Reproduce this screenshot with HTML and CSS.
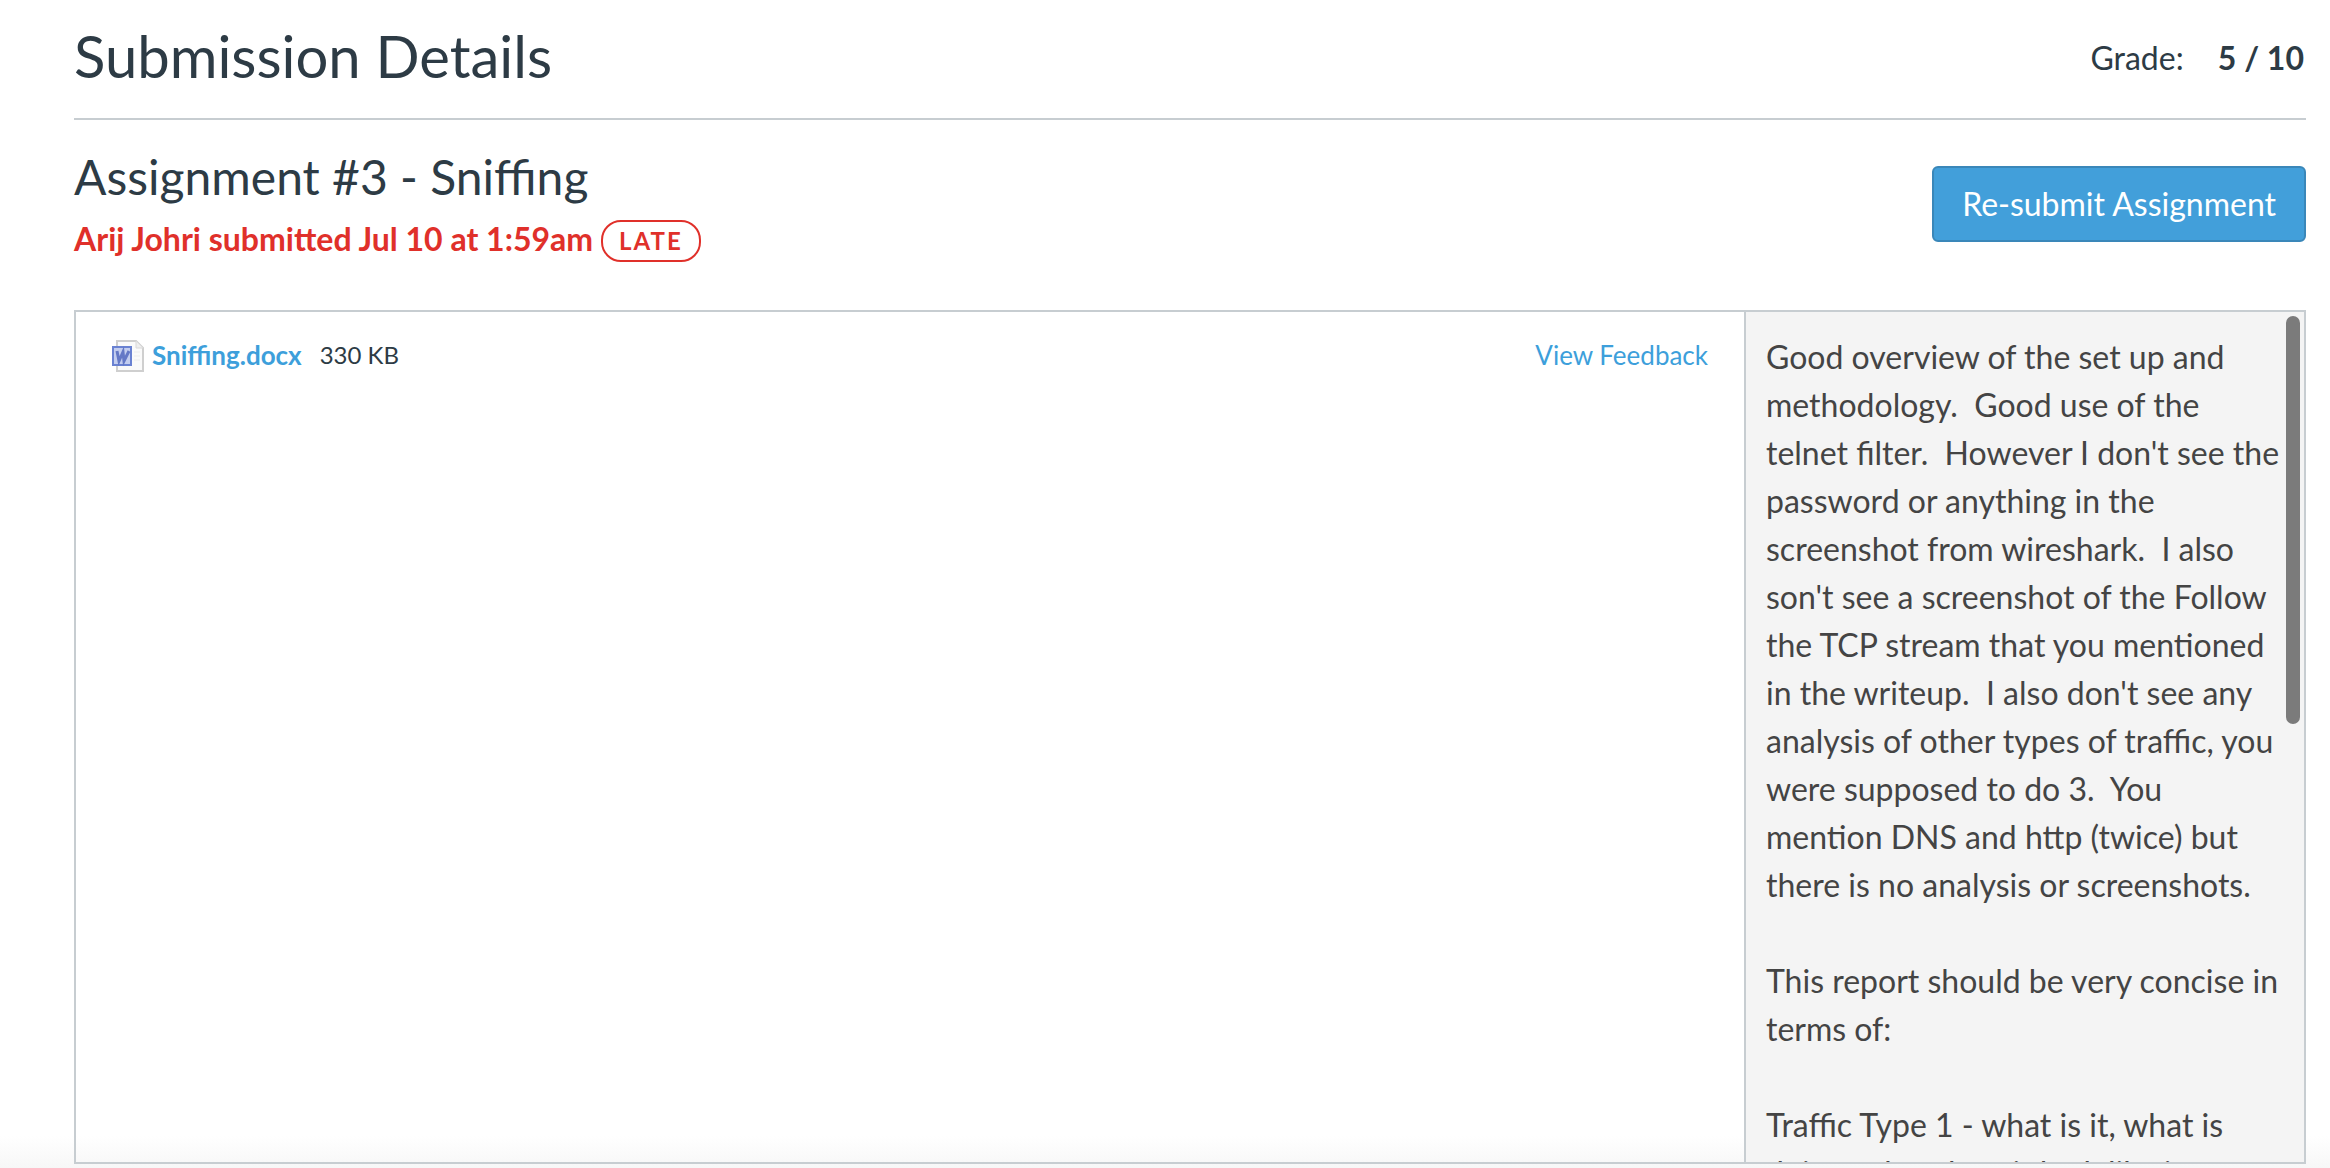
FILE: index.html
```
<!DOCTYPE html>
<html lang="en">
<head>
  <meta charset="UTF-8" />
  <meta name="viewport" content="width=device-width, initial-scale=1.0" />
  <title>Submission Details</title>
  <link rel="stylesheet" href="styles.css">
</head>
<body>
  <header class="page-header">
    <h1>Submission Details</h1>
    <div class="grade">Grade: <strong>5 / 10</strong></div>
  </header>

  <section class="assignment">
    <div>
      <h2>Assignment #3 - Sniffing</h2>
      <div class="submitted">
        <span>Arij Johri submitted Jul 10 at 1:59am</span>
        <span class="late-pill">late</span>
      </div>
    </div>
    <button class="resubmit" type="button">Re-submit Assignment</button>
  </section>

  <main class="panel">
    <div class="files">
      <svg class="doc-icon" viewBox="0 0 32 32" aria-hidden="true">
        <path d="M5 1h19l7 7v23H5z" fill="#fafafa" stroke="#cfcfcf" stroke-width="2" />
        <path d="M24 1v7h7" fill="#eeeeee" stroke="#d8d8d8" stroke-width="1" />
        <path d="M22 12h6M22 16h6M22 20h6" stroke="#ececec" stroke-width="1" />
        <rect x="1" y="7" width="18" height="18" fill="#c3cdef" stroke="#6a82d2" stroke-width="2" />
        <path d="M5 11l2 10 4-9 1 9 5-10" fill="none" stroke="#6478c6" stroke-width="3" />
      </svg>
      <a class="file-name" href="#">Sniffing.docx</a>
      <span class="file-size">330 KB</span>
      <a class="feedback" href="#">View Feedback</a>
    </div>

    <aside class="comments">
      <div class="comment-scroll">
        <p>Good overview of the set up and methodology.&nbsp; Good use of the telnet filter.&nbsp; However I don't see the password or anything in the screenshot from wireshark.&nbsp; I also son't see a screenshot of the Follow the TCP stream that you mentioned in the writeup.&nbsp; I also don't see any analysis of other types of traffic, you were supposed to do 3.&nbsp; You mention DNS and http (twice) but there is no analysis or screenshots.</p>
        <p>This report should be very concise in terms of:</p>
        <p>Traffic Type 1 - what is it, what is doing, what does it look like in</p>
      </div>
      <div class="scroll-thumb"></div>
    </aside>
  </main>
</body>
</html>
```

FILE: styles.css
```
* {
  box-sizing: border-box;
}

body {
  margin: 0;
  height: 100vh;
  padding: 0 24px 4px 74px;
  display: flex;
  flex-direction: column;
  background: linear-gradient(to top, #f7f7f7, #ffffff 32px);
  color: #2d3b45;
  font-family: Lato, sans-serif;
  font-size: 32px;
  line-height: 48px;
  overflow: hidden;
}

h1,
h2,
p {
  margin: 0;
  font-weight: 400;
}

a {
  color: #3d9fdb;
  text-decoration: none;
}

.page-header {
  display: flex;
  justify-content: space-between;
  align-items: center;
  height: 120px;
  padding: 0 2px 2px 0;
  border-bottom: 2px solid #c7cdd1;
}

h1 {
  font-size: 58px;
  padding-bottom: 4px;
}

.grade strong {
  margin-left: 26px;
}

.assignment {
  display: flex;
  justify-content: space-between;
  align-items: flex-start;
  height: 190px;
  padding-top: 28px;
}

h2 {
  font-size: 48px;
  line-height: 58px;
}

.submitted {
  display: flex;
  align-items: center;
  gap: 8px;
  margin-top: 5px;
  line-height: 56px;
  color: #e0302a;
  font-weight: 700;
}

.late-pill {
  margin-top: 4px;
  padding: 0 16px;
  border: 2px solid #e0302a;
  border-radius: 20px;
  font-size: 24px;
  line-height: 38px;
  letter-spacing: 2px;
  text-transform: uppercase;
}

.resubmit {
  margin-top: 18px;
  padding: 12px 28px;
  border: 2px solid #3a87b9;
  border-radius: 6px;
  background: #429fda;
  color: #ffffff;
  font: inherit;
  cursor: pointer;
}

.panel {
  display: flex;
  flex: 1;
  min-height: 0;
  border: 2px solid #c7cdd1;
}

.files {
  flex: 3;
  display: flex;
  align-items: flex-start;
  padding: 24px 36px;
  font-size: 26px;
  line-height: 38px;
}

.doc-icon {
  width: 32px;
  height: 32px;
  margin: 4px 8px 0 0;
}

.file-name {
  font-weight: 700;
}

.file-size {
  margin-left: 18px;
  font-size: 24px;
}

.feedback {
  margin-left: auto;
}

.comments {
  position: relative;
  flex: 0 0 560px;
  border-left: 2px solid #c7cdd1;
  background: #f4f4f4;
  color: #444444;
}

.comment-scroll {
  height: 100%;
  padding: 21px 20px 0;
  overflow: hidden;
}

.comment-scroll p {
  margin-bottom: 48px;
}

/* overlay scrollbar, sits on top of the comments */
.scroll-thumb {
  position: absolute;
  top: 4px;
  right: 4px;
  width: 14px;
  height: 48%;
  border-radius: 7px;
  background: #7b7b7b;
}
```
